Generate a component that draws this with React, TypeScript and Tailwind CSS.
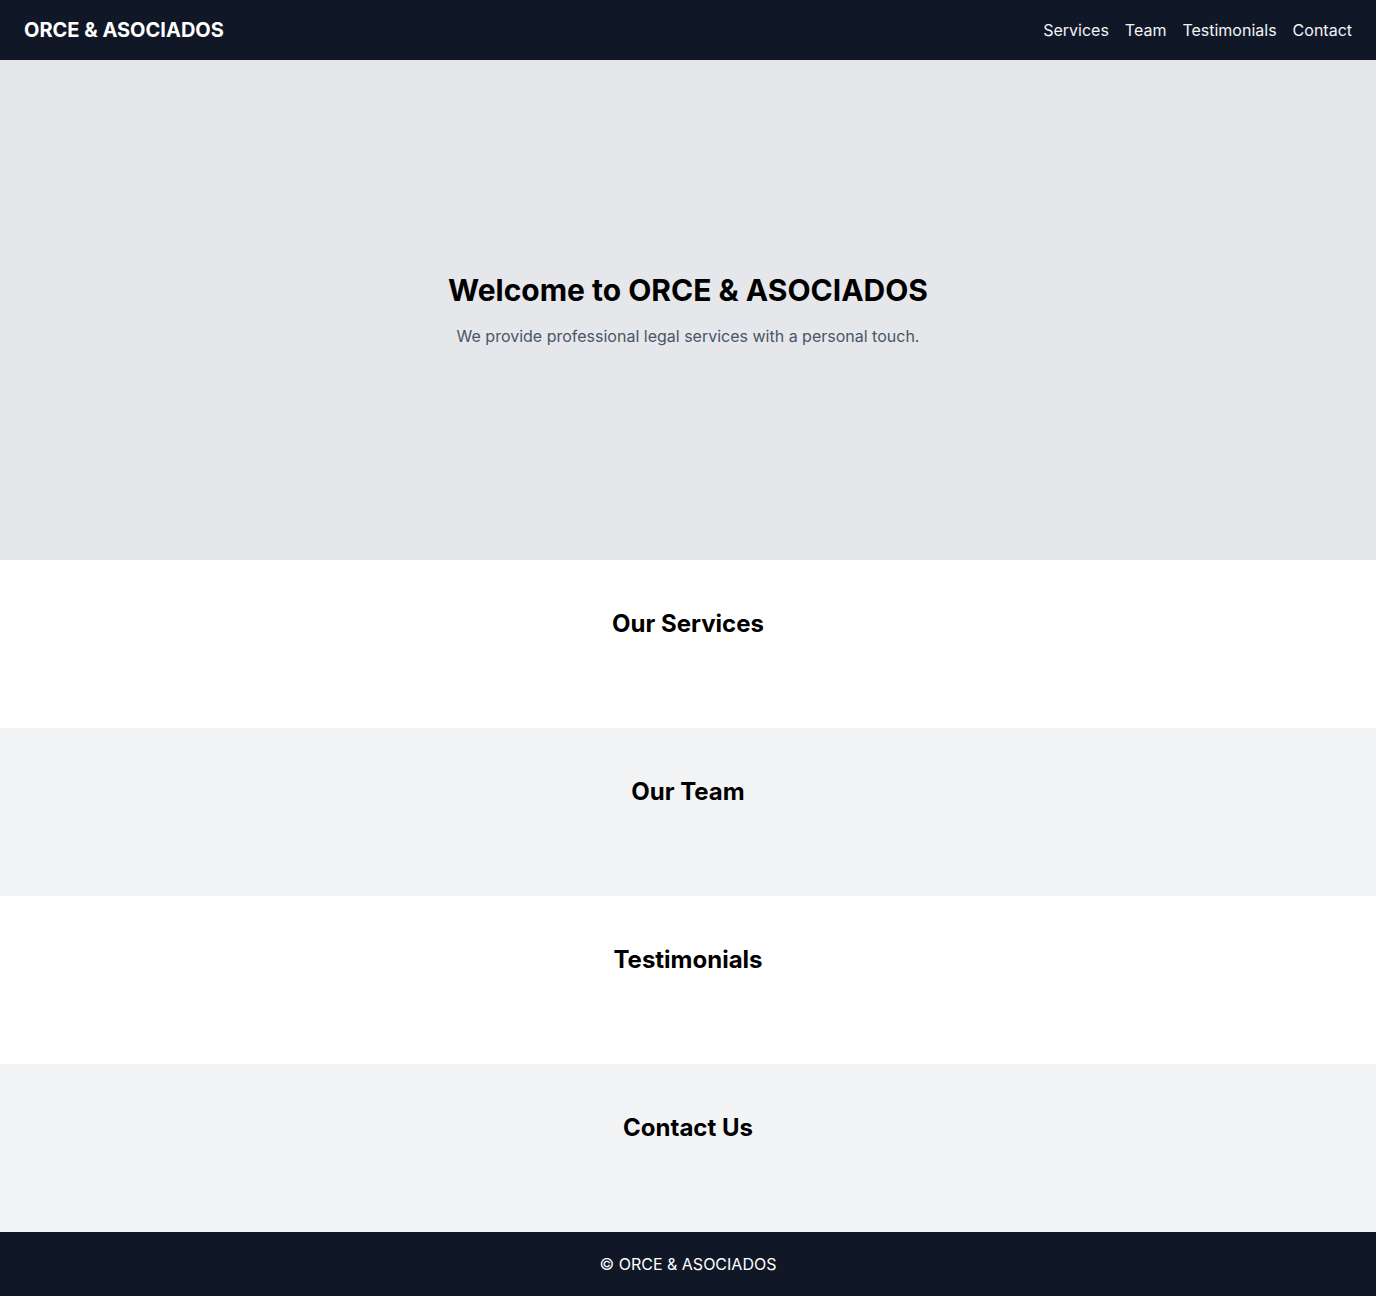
import React from 'react';

const sections = [
  { id: 'services', title: 'Our Services', bg: 'bg-white' },
  { id: 'team', title: 'Our Team', bg: 'bg-gray-100' },
  { id: 'testimonials', title: 'Testimonials', bg: 'bg-white' },
  { id: 'contact', title: 'Contact Us', bg: 'bg-gray-100' },
];

const App: React.FC = () => {
  return (
    <div className="min-h-screen font-['Inter',sans-serif] text-black">
      <header className="bg-gray-900 text-white h-[60px] px-6 flex items-center justify-between">
        <div className="text-xl font-bold">ORCE &amp; ASOCIADOS</div>
        <nav className="flex gap-4 text-base text-gray-100">
          <a href="#services">Services</a>
          <a href="#team">Team</a>
          <a href="#testimonials">Testimonials</a>
          <a href="#contact">Contact</a>
        </nav>
      </header>

      <section className="bg-gray-200 h-[500px] flex flex-col items-center justify-center text-center">
        <h1 className="text-3xl font-bold mb-4">Welcome to ORCE &amp; ASOCIADOS</h1>
        <p className="text-base text-gray-600">We provide professional legal services with a personal touch.</p>
      </section>

      {sections.map(s => (
        <section key={s.id} id={s.id} className={`${s.bg} py-12 text-center`}>
          <h2 className="text-2xl font-bold mb-10">{s.title}</h2>
        </section>
      ))}

      <footer className="bg-gray-900 text-white py-5 text-center text-base">
        © ORCE &amp; ASOCIADOS
      </footer>
    </div>
  );
};

export default App;
